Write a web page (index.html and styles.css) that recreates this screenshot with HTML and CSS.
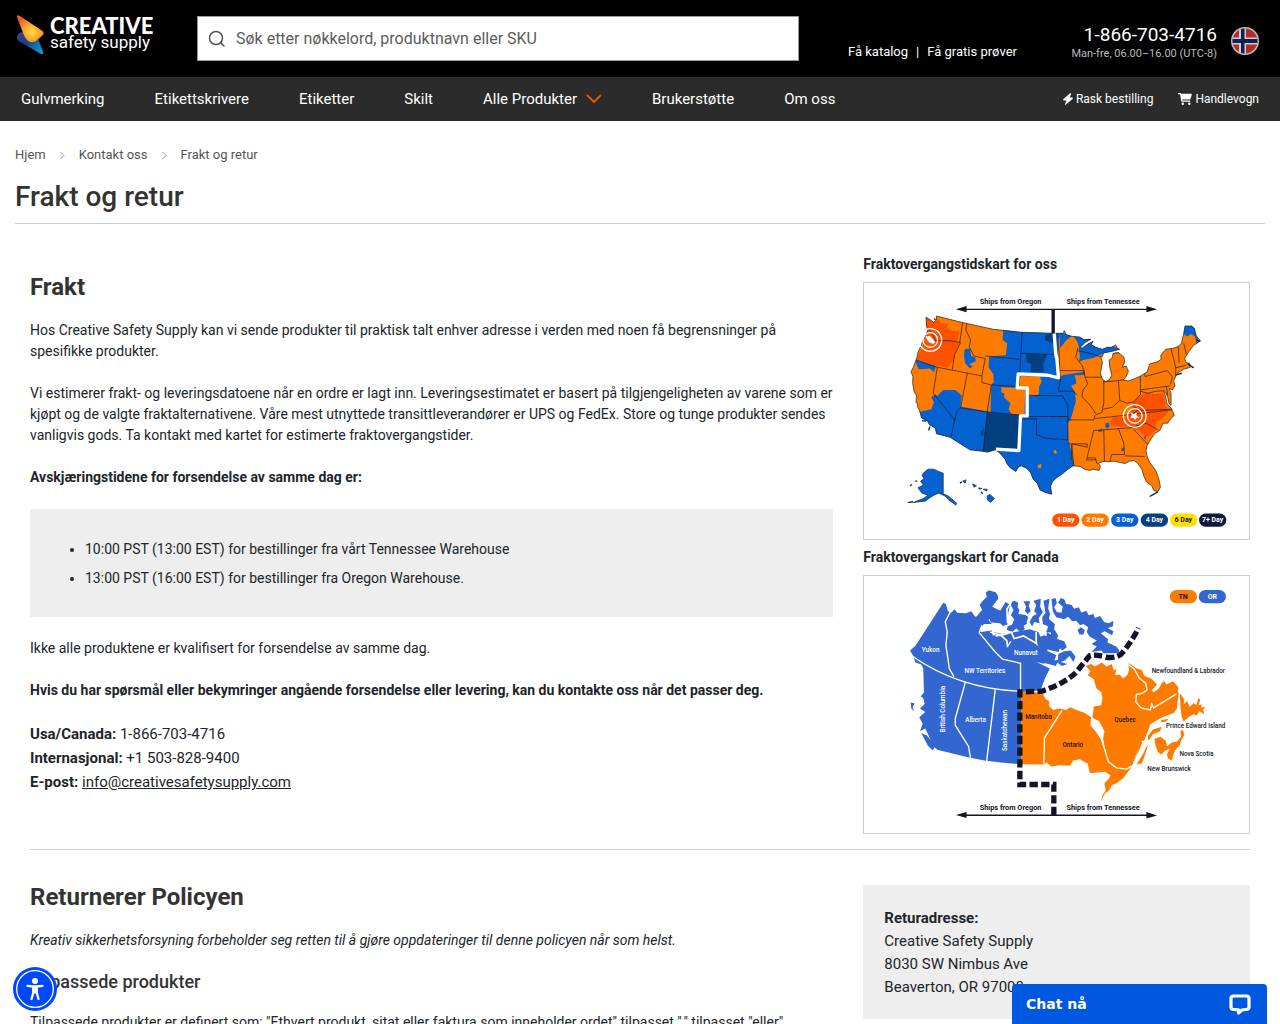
FILE: index.html
```html
<!DOCTYPE html>
<html lang="no">
<head>
<meta charset="utf-8">
<meta name="viewport" content="width=device-width, initial-scale=1">
<title>Frakt og retur | Creative Safety Supply</title>
<link rel="stylesheet" href="styles.css">
</head>
<body>
<header>
  <div class="topbar">
    <a class="logo" href="#">
      <svg width="28" height="42" viewBox="0 0 28 42" aria-hidden="true">
        <defs>
          <radialGradient id="flame" cx="16" cy="18" r="17" gradientUnits="userSpaceOnUse"><stop offset="0" stop-color="#ffdf35"/><stop offset=".5" stop-color="#f9a12c"/><stop offset="1" stop-color="#ee5a2c"/></radialGradient>
          <linearGradient id="sea" x1="0" y1="18" x2="26" y2="40" gradientUnits="userSpaceOnUse"><stop offset="0" stop-color="#4a3a90"/><stop offset=".45" stop-color="#17407f"/><stop offset="1" stop-color="#0aa0e6"/></linearGradient>
        </defs>
        <path d="M5 18Q0 21 1 25Q2 27 6 29L25 40Q28 41 27 38L22 24Z" fill="url(#sea)"/>
        <path d="M1 3Q0 0 4 2L25 16Q29 18 27 21L20 27Q15 30 11 26Q9 24 7 19Z" fill="url(#flame)"/>
      </svg>
      <span class="logo-text"><b>CREATIVE</b><span>safety supply</span></span>
    </a>
    <form class="search" role="search">
      <svg width="18" height="18" viewBox="0 0 18 18" fill="none" stroke="#555" stroke-width="1.5" aria-hidden="true"><circle cx="8" cy="8" r="6.5"/><path d="M12.6 12.6L16 16" stroke-linecap="round"/></svg>
      <input type="text" aria-label="Søk" placeholder="Søk etter nøkkelord, produktnavn eller SKU">
    </form>
    <div class="offers"><a href="#">Få katalog</a><span>|</span><a href="#">Få gratis prøver</a></div>
    <div class="phone"><a href="#">1-866-703-4716</a><span>Man-fre, 06.00–16.00 (UTC-8)</span></div>
    <button class="flag" aria-label="Norge">
      <svg width="28" height="28" viewBox="0 0 28 28"><defs><clipPath id="disc"><circle cx="14" cy="14" r="12.5"/></clipPath></defs>
        <circle cx="14" cy="14" r="14" fill="#bbb"/><g clip-path="url(#disc)"><path d="M0 0H28V28H0Z" fill="#b52a30"/><path d="M8 0h7v28H8zM0 10.500h28v7H0z" fill="#ccc"/><path d="M10 0h3.500v28H10zM0 12h28v4H0z" fill="#0b2354"/></g></svg>
    </button>
  </div>
  <nav class="mainnav">
    <a href="#">Gulvmerking</a><a href="#">Etikettskrivere</a><a href="#">Etiketter</a><a href="#">Skilt</a>
    <a href="#" class="drop">Alle Produkter<svg width="16" height="10" viewBox="0 0 16 10" fill="none" stroke="#e8590c" stroke-width="1.800" stroke-linecap="round" aria-hidden="true"><path d="M1.500 1.500L8 8L14.500 1.500"/></svg></a>
    <a href="#">Brukerstøtte</a><a href="#">Om oss</a>
    <div class="tools">
      <a href="#"><svg width="10" height="12" viewBox="0 0 10 12" fill="#fff" stroke="#fff" stroke-width=".6" aria-hidden="true"><path d="M7.500 .3L.5 6.200Q0 7 .9 7.200H3.800L2.200 11.700L9.500 5.800Q10 5 9.100 4.800H6.200L7.900.7Z"/></svg>Rask bestilling</a>
      <a href="#"><svg width="14" height="12" viewBox="0 0 14 12" fill="#fff" aria-hidden="true"><path d="M0 0H2.300Q2.900 0 3 .8H13.300Q14 .8 13.800 1.500L12.700 5.600Q12.500 6.400 11.700 6.400H4.200L4.400 7.600H12.200V8.800H4Q3.400 8.800 3.300 8.200L2 1.200H0Z"/><circle cx="4.800" cy="10.700" r="1.200"/><circle cx="11.300" cy="10.700" r="1.200"/></svg>Handlevogn</a>
    </div>
  </nav>
</header>

<main>
  <nav class="crumbs" aria-label="Brødsmuler">
    <a href="#">Hjem</a>
    <svg width="5" height="8" viewBox="0 0 5 8" fill="none" stroke="#999"><path d="M.5 1L4 4.500L.5 8"/></svg>
    <a href="#">Kontakt oss</a>
    <svg width="5" height="8" viewBox="0 0 5 8" fill="none" stroke="#999"><path d="M.5 1L4 4.500L.5 8"/></svg>
    <a href="#">Frakt og retur</a>
  </nav>
  <h1>Frakt og retur</h1>

  <section class="row shipping">
    <div class="col-main">
      <h2>Frakt</h2>
      <p>Hos Creative Safety Supply kan vi sende produkter til praktisk talt enhver adresse i verden med noen få begrensninger på spesifikke produkter.</p>
      <p>Vi estimerer frakt- og leveringsdatoene når en ordre er lagt inn. Leveringsestimatet er basert på tilgjengeligheten av varene som er kjøpt og de valgte fraktalternativene. Våre mest utnyttede transittleverandører er UPS og FedEx. Store og tunge produkter sendes vanligvis gods. Ta kontakt med kartet for estimerte fraktovergangstider.</p>
      <p><b>Avskjæringstidene for forsendelse av samme dag er:</b></p>
      <ul class="cutoff">
        <li>10:00 PST (13:00 EST) for bestillinger fra vårt Tennessee Warehouse</li>
        <li>13:00 PST (16:00 EST) for bestillinger fra Oregon Warehouse.</li>
      </ul>
      <p>Ikke alle produktene er kvalifisert for forsendelse av samme dag.</p>
      <p><b>Hvis du har spørsmål eller bekymringer angående forsendelse eller levering, kan du kontakte oss når det passer deg.</b></p>
      <p class="contact"><b>Usa/Canada:</b> 1-866-703-4716<br><b>Internasjonal:</b> +1 503-828-9400<br><b>E-post:</b> <a href="#">info@creativesafetysupply.com</a></p>
    </div>
    <div class="col-side maps">
      <h4>Fraktovergangstidskart for oss</h4>
      <svg class="map" viewBox="12 9 1155 768" role="img" aria-label="Kart over USA">
        <defs><clipPath id="usa"><path id="usaShape" d="M198 112L212 120L222 128L226 122L223 116L230 118L229 108L305 127L400 148L487 157L581 160H611L613 152L619 164L636 169L660 171L672 179L693 178L676 188L660 203L668 204L684 192L700 184L694 194L708 202L728 208L742 202L754 202L768 195L772 204L780 208L758 214L732 219L726 232L722 228L728 246L722 280L728 298L738 305L748 300L756 286L750 262L748 240L756 236L760 220L776 218L792 231L795 245L788 262L799 258L806 274L798 292L790 301L806 303L826 296L842 288L862 276L870 252L895 245L904 238L903 226L918 208L940 205L955 200L965 190L972 160L976 138H996L1004 145L1010 168L1022 182L1012 190L1002 196L995 205L984 220L975 235L979 248L990 250L992 262L982 265L972 268L953 280L948 290L942 302L946 318L938 330L934 328L928 326L934 340V376L928 372L924 352L918 340L912 334L918 352L922 372L935 386L944 406L934 416L924 430L910 430L900 452L884 462L870 484L862 497L859 512L862 530L870 548L888 572L898 600L902 622L894 636L882 632L876 618L860 606L852 588L846 568L832 548L822 542L810 544L796 551L780 548L764 544L744 546L730 545L716 550L722 560L718 572L700 568L690 572L674 568L662 560L640 558L622 570L608 582L590 594L578 606L572 620L576 643L556 638L540 630L532 610L520 598L512 578L500 565L484 558L475 562L468 575L450 563L440 550L436 538L418 518L406 510L383 517L372 515L330 510L270 472L230 462L226 445L208 434L203 424L185 414L178 390L172 380L174 372L168 368L170 348L162 334L158 310L159 290L153 276L160 262L170 235L174 218L190 180L204 150L200 140Z"/></clipPath></defs>
        <use href="#usaShape" fill="#ff7b00"/>
        <g clip-path="url(#usa)">
          <path fill="#0362d0" d="M428 146L580 155L592 232L594 296L610 285L672 276L672 285L645 286L650 310L634 318L646 336L648 365L638 400L632 420L624 430L626 480L638 530L646 570L560 660L400 560L150 480L160 400L214 388L222 366L214 352L226 344L232 348L250 330L285 330L305 346L302 380L392 396L394 318L398 310L400 282L386 262L388 230L438 226L442 190L428 180L430 160ZM165 240L228 258L222 276L210 266L176 268ZM314 208L330 206L334 228L346 232L348 244L328 252L338 260L330 266L316 250L312 230Z"/>
          <path fill="#0362d0" d="M612 160L640 166L620 180L600 205L596 270L580 276L575 155ZM657 205L690 180L780 205V220L728 222L700 234L670 240L658 246L660 228ZM640 168L700 174L660 210L653 186ZM972 130H1000L1015 175L1020 195L1010 190L1006 170L994 162L982 170L970 160Z"/>
          <path fill="#ff7b00" d="M424 322L496 324L494 405L455 402L446 388L452 370L432 352L434 342L424 336ZM482 288L540 290L546 305L538 320L536 345L505 347L502 322L474 320ZM596 180L600 170L600 250L594 236ZM374 290L382 262L400 282L402 308L366 310L366 292Z"/>
          <path fill="#044080" d="M382 398L480 406L474 512L370 514ZM498 223H562L556 240L550 252L552 276H512L514 252L500 246ZM556 165L580 160L584 190L570 186L556 182ZM362 455L372 446L370 470L360 464Z"/>
          <path fill="#ff5200" d="M198 112L228 124L228 116L270 130L292 148L300 160L290 186L298 192L284 226L280 244L262 264L168 242L196 180ZM820 366L844 346L860 338L880 342L910 340L918 374L926 396L904 420L890 426L888 450L872 466L858 472L830 446L806 440H756L748 430L760 412L808 410Z"/>
          <path fill="#e8450a" d="M834 368L852 356L862 364L846 400L832 396ZM206 182L280 184L284 200L274 188L220 190Z" opacity=".5"/>
          <path fill="#ff7b00" d="M234 114L312 132L306 190L296 180L302 152L280 154L262 144L264 132L240 128Z"/>
          <path fill="#0362d0" d="M738 430L746 428L750 440L742 446L736 440ZM716 450L728 448L726 456L716 456ZM786 506L792 502V514L784 512ZM852 474L858 468V480Z"/>
          <path fill="#ff7b00" d="M580 514L588 510L592 520L584 522ZM534 556L544 552V564L534 566Z"/>
          <path fill="none" stroke="#1b1a20" stroke-width="2" d="M206 146L228 182L270 182L302 188M302 188L284 224L277 270M168 240L232 262L366 288M308 128L299 190M320 132L318 150L332 180L328 200L342 228L376 236L366 288M376 228L478 238M487 157L478 316M484 220L586 224M366 288V308L394 315L470 320M232 262L220 340L284 420L274 470M322 280L302 384L290 396L284 424M302 384L380 396L486 406M394 316L382 396L370 514M486 406L476 510M490 417H530V464L556 475L590 478L625 480M500 346L600 348M500 410L624 410"/>
          <g transform="translate(570 0)" fill="none" stroke="#1b1a20" stroke-width="2"><path d="M30 272H103L104 286M22 160L28 220L30 272L32 300L26 330M26 334H70L82 345M30 348H38L54 376V480M54 420H132L136 406M0 410H54M54 492H112V502L66 492L64 540M66 494L72 560M84 204L78 232L98 258L106 292H154M106 292L114 312L100 330L96 350L118 372L140 404L156 398L162 370V300M206 302L210 362L188 382L160 388M162 306L206 302L232 298M210 362L232 370L252 366L272 344V288M272 330L360 318M284 278L286 290L352 272L368 290L362 314M272 334L294 340L318 334L344 332M250 372L262 392L246 404L136 416M262 392L370 388M246 404L380 388M132 452L240 444L270 436M132 450L120 500L110 540H140M162 450L164 545M206 446L222 490L224 524H186L180 546M226 528L284 530M240 444L272 436L290 430L324 450M250 446L294 494M112 534H136L142 552M364 206L378 262V290M386 200L388 248M402 190L410 224M376 264L410 256M84 212L128 222L150 230M350 320L354 346"/></g>
        </g>
        <use href="#usaShape" fill="none" stroke="#1b1a20" stroke-width="2"/>
        <path fill="none" stroke="#fff" stroke-width="10" stroke-linejoin="round" d="M583 160L588 225L591 235L596 294L565 286L475 282L472 324H502V408H482L477 512L408 508"/>
        <path fill="#0362d0" stroke="#10254a" stroke-width="2" d="M194 576L204 568H222L234 574L250 580V642L264 648L290 670L288 676L266 660L254 648L236 640L222 646L210 654L196 664L160 668L190 656L204 646L186 640L174 624L190 616L182 604L192 596L186 586ZM382 648L390 644L404 656L392 668L382 660ZM308 604L318 600L316 610ZM338 612L350 618L342 622ZM370 628L382 628L380 634ZM143 668L158 664V668ZM356 624L366 626L358 628Z"/>
        <path stroke="#10254a" stroke-width="4" d="M150 618L156 614M166 604L172 604M186 422L198 424M210 440L206 452M300 610L306 606M364 636L368 642M870 650L884 642L894 636M984 252L1002 264M1010 180L1022 184M950 285L966 280"/>
        <g fill="none" stroke="#fff" stroke-width="4"><circle cx="211" cy="180" r="34"/><circle cx="211" cy="180" r="22"/><circle cx="825" cy="408" r="34"/><circle cx="825" cy="408" r="22"/></g>
        <path fill="#fff" d="M196 170L210 168L216 174L226 188L220 192L208 188L202 180ZM812 398L822 402L832 398L830 406L840 414L832 412L828 420L820 414L812 414L816 406Z"/>
        <g class="ink"><path d="M288 88L320 78V86H860V78L892 88L860 97V90H320V97ZM575 90H585V160H575Z"/></g>
        <g class="legend"><rect x="577" y="701" width="82" height="40" rx="20" fill="#ff5200"/><rect x="665" y="701" width="82" height="40" rx="20" fill="#ff7b00"/><rect x="754" y="701" width="82" height="40" rx="20" fill="#0362d0"/><rect x="843" y="701" width="82" height="40" rx="20" fill="#044080"/><rect x="931" y="701" width="82" height="40" rx="20" fill="#ffde00"/><rect x="1018" y="701" width="82" height="40" rx="20" fill="#0c1a3c"/>
        <text x="618" y="728">1 Day</text><text x="706" y="728">2 Day</text><text x="795" y="728">3 Day</text><text x="884" y="728">4 Day</text><text x="971" y="728" class="dark">6 Day</text><text x="1059" y="728">7+ Day</text></g>
        <text class="ships" x="452" y="72">Ships from Oregon</text><text class="ships" x="730" y="72">Ships from Tennessee</text>
      </svg>
      <h4>Fraktovergangskart for Canada</h4>
      <svg class="map" viewBox="12 12 1155 771" role="img" aria-label="Kart over Canada">
        <path fill="#3367cf" d="M150 236L166 222L250 92L258 96L264 118L274 122L284 112L292 122L318 124L334 118L346 134L362 132L372 146L384 142L396 156H372L364 166L362 180L396 176L398 190L420 192L434 210L446 222L458 204L470 206L476 196L500 200L520 192L524 214L534 222L530 200L552 190L574 196L590 210L604 220L596 240L566 234L590 248L584 266L600 262L586 284L530 270L570 290L556 318L542 356L484 360V577L430 573L378 567L330 558L232 534L224 526L218 536L204 522L184 484L200 490L212 504L196 470L180 478L188 456L178 436L196 420L180 410L194 396L190 378L182 374L192 362L190 290L184 278L166 272L160 252ZM152 392L164 394L158 406L162 418L154 410Z"/>
        <!-- Arctic islands -->
        <g transform="translate(345 30)"><path fill="#3367cf" d="M0 110L14 92L22 84L14 68L26 54L36 44L32 32L42 25L62 31L68 38L70 50L58 66L52 74L76 86L92 60L106 68L100 92L98 128L84 132L76 124L48 122L44 112L30 118L20 124L6 120ZM50 92L74 88L90 98L88 112L62 104L48 108ZM104 62L118 56L130 62L128 76L134 84L130 96L150 98L162 106L158 124L146 132L150 142L136 150L124 140L112 150L96 144L98 134L112 128L118 112L108 100L116 84ZM146 58H166L162 72L168 88L158 96L150 86L154 74ZM176 56L198 50L196 74L204 90L192 108L194 124L178 120L172 134L164 120L174 102L186 96L178 88L184 70ZM206 56L224 50L220 80L226 96L222 110L240 126L238 142L250 160L244 180L230 174L228 152L214 150L220 134L204 126L202 106L212 92ZM230 52L242 48L246 64L238 76L246 90L260 92L264 74L250 62L258 48L268 52L274 66L290 68L298 80L312 76L320 92L334 86L342 100L356 96L360 108L376 102L388 120L402 124L416 116L414 134L398 138L416 148L412 160L390 148L378 154L400 172L398 182L424 194L434 206L432 214L386 214L380 206L350 210L366 194L350 186L366 176L344 164L336 150L340 136L326 126L316 130L304 116L292 118L280 104L268 112L244 106L234 88ZM308 144L318 136L330 144L326 158L314 158ZM56 150L82 156L112 152L132 148L164 142L190 150L198 166L182 190L168 180L128 184L106 178L96 192L86 176L66 170ZM216 150L250 172L268 178L276 196L262 206L248 192L230 190L214 176ZM250 216L268 208L288 206L302 224L296 240L284 222L270 236L258 240L278 246L262 252L250 244Z"/>
        <path fill="none" stroke="#fff" stroke-width="5" d="M46 150L78 160L96 176L98 196M110 152L118 170L146 162L184 184V150M218 204L250 220M62 162L86 158L112 150M208 246L240 254M110 60L96 82L98 124M166 94L158 122L172 140M138 56L140 96"/></g>
        <path fill="#ff7b00" d="M484 360L548 362L556 380L568 388V402L580 414L598 410L618 414L632 406L650 414L672 422L694 436L692 460L708 480L722 500L750 574L815 587L790 619L770 634L756 640L748 656L736 664L724 686L728 670L738 656L734 634L746 622L752 610L736 600L690 604L684 576L660 562L640 566L630 582L600 580L574 584L560 572L554 578L484 577Z"/>
        <g transform="translate(570 0)"><path fill="#ff7b00" d="M108 282L124 276L136 284L156 272L170 284L186 276L192 294L200 292L196 310L210 308L220 320L234 308L238 292L234 274L242 276L260 290L276 294L284 312L304 320L322 338L342 324L350 338L370 328L386 346L384 366L376 392L346 408L310 426L300 448L296 474L280 506L262 540L248 580L220 590L190 584L170 560L160 500L164 478L148 448L128 438L132 404L154 400L158 378L154 360L140 350L132 322L114 310L122 298Z"/></g>
        <!-- Gulf of St. Lawrence and the Atlantic provinces -->
        <g transform="translate(660 249)">
          <path fill="#ff7b00" d="M165 322L190 280L206 252L218 224L240 212L262 204L290 180L300 160L296 110L286 130L220 170L180 270L160 330L186 326L194 306L206 268Z"/>
          <path fill="#fff" d="M304 112V172L314 204L306 236L288 250L270 262L258 252L238 242L216 256L202 268L192 294L166 336L158 330L188 264L184 260L194 256L212 208L246 188L282 174L292 160L296 120Z"/>
          <path fill="#ff7b00" d="M206 258L204 244L220 224L246 216L240 230L220 238ZM244 196L266 192L260 200L244 202ZM224 252L242 246L258 258L262 274L278 262L292 260L304 246L302 228L310 226L314 240L304 258L300 272L286 286L280 302L276 318L264 310L262 298L270 282L258 286L244 300L234 290L228 274ZM300 114L314 134L312 148L322 138L330 156L342 144L350 150L356 130L362 134L356 152L366 148L364 158L378 156L370 164L374 178L358 168L352 182L342 178L328 186L312 200L306 186L302 156Z"/>
          <path fill="#fff" d="M216 106L230 92L236 78L258 76L246 84L238 100L222 112Z"/>
        </g>
        <g fill="none" stroke="#fff" stroke-width="4"><path d="M272 118L256 150L262 180L258 220L264 260L268 290L282 314M156 252Q300 352 484 358M366 160L358 182L406 240L428 262L482 274V356M316 332L286 440V460L326 524L332 560M406 354L380 570M606 416L554 498L552 576M722 490L732 524L746 570L770 588L800 592L820 582M804 276L824 292L838 318L858 334L862 354L848 364L830 368L828 390L844 408L872 414L876 396L882 408L950 366"/></g>
        <g class="ink"><path d="M288 730L320 721V728H860V721L892 731L860 740V733H320V739Z"/></g>
        <path fill="none" stroke="#141427" stroke-width="16" stroke-dasharray="25 10" d="M582 730V638H480V360L546 358Q620 332 650 300Q680 262 690 251Q704 246 740 256Q776 260 790 240Q820 202 836 168"/>
        <g class="legend"><rect x="930" y="54" width="82" height="40" rx="20" fill="#ff7b00"/><rect x="1017" y="54" width="82" height="40" rx="20" fill="#3367cf"/><text class="dark" x="970" y="82">TN</text><text x="1058" y="82">OR</text></g>
        <g class="places light"><text x="212" y="241">Yukon</text><text x="375" y="302">NW Territories</text><text x="498" y="250">Nunavut</text><text x="347" y="449">Alberta</text><text transform="translate(256 412) rotate(-90)">British Columbia</text><text transform="translate(440 476) rotate(-90)">Saskatchewan</text></g>
        <g class="places"><text x="536" y="441">Manitoba</text><text x="639" y="526">Ontario</text><text x="796" y="449">Quebec</text><text x="986" y="302">Newfoundland &amp; Labrador</text><text x="1008" y="469">Prince Edward Island</text><text x="1010" y="552">Nova Scotia</text><text x="928" y="598">New Brunswick</text></g>
        <text class="ships" x="452" y="715">Ships from Oregon</text><text class="ships" x="730" y="715">Ships from Tennessee</text>
      </svg>
    </div>
  </section>

  <hr>

  <section class="row">
    <div class="col-main">
      <h2>Returnerer Policyen</h2>
      <p><i>Kreativ sikkerhetsforsyning forbeholder seg retten til å gjøre oppdateringer til denne policyen når som helst.</i></p>
      <h3>Tilpassede produkter</h3>
      <p>Tilpassede produkter er definert som: "Ethvert produkt, sitat eller faktura som inneholder ordet" tilpasset "," tilpasset "eller"</p>
    </div>
    <div class="col-side">
      <address><b>Returadresse:</b><br>Creative Safety Supply<br>8030 SW Nimbus Ave<br>Beaverton, OR 97008</address>
    </div>
  </section>
</main>

<button class="access" aria-label="Tilgjengelighet">
  <svg width="44" height="44" viewBox="0 0 44 44"><circle cx="22" cy="22" r="22" fill="#0048ff"/><circle cx="22" cy="22" r="18.300" fill="none" stroke="#fff" stroke-width="1.300"/><circle cx="22" cy="14" r="3" fill="#fff"/><path d="M14.500 18.800L20 19.500H24L29.500 18.800M22 20V25.500M20.200 20V26L18.500 32M23.800 20V26L25.500 32" fill="none" stroke="#fff" stroke-width="2.300" stroke-linecap="round"/></svg>
</button>
<button class="chat"><span>Chat nå</span>
  <svg width="22" height="21" viewBox="0 0 22 21" fill="none" stroke="#fff" stroke-width="3.200" stroke-linejoin="round" aria-hidden="true"><path d="M4.500 2H17.500Q20 2 20 4.500V13Q20 15.500 17 15.500L13 16L9.500 19V15.800L4.500 15.500Q2 15.500 2 13V4.500Q2 2 4.500 2Z"/></svg>
</button>
</body>
</html>
```
FILE: styles.css
```css
* { box-sizing: border-box; }
body { margin: 0; height: 100vh; overflow: hidden; font: 14px/21px Roboto, "Liberation Sans", sans-serif; color: #212529; background: #fff; }
a { color: inherit; text-decoration: none; }
button { border: 0; padding: 0; background: none; cursor: pointer; }
svg { display: block; flex: none; }
h1, h2, h3, h4, p, ul { margin: 0; }
b, h2, h4 { font-weight: 700; }

.topbar { display: flex; align-items: center; height: 77px; padding: 0 21px 0 16px; background: #000; color: #fff; }
.logo { display: flex; align-items: center; width: 181px; height: 77px; gap: 6px; padding-bottom: 8px; }
.logo-text { display: flex; flex-direction: column; }
.logo-text b { font: 900 22px/16px Lato, sans-serif; }
.logo-text span { font-size: 17px; line-height: 17px; }
.search { display: flex; flex: 1; align-items: center; height: 45px; padding-left: 10px; gap: 10px; border: 1px solid #999; background: #fff; }
.search input { flex: 1; min-width: 0; height: 40px; padding: 0; border: 0; outline: 0; background: none; font: 16px/24px Roboto, sans-serif; }
.search input::placeholder { color: #5c5c5c; opacity: 1; }
.offers { display: flex; gap: 8px; margin: 25px 49px 0 49px; font-size: 13px; }
.phone { display: flex; flex-direction: column; align-items: flex-end; min-width: 151px; margin-right: 14px; padding-top: 8px; }
.phone a { font-size: 19px; line-height: 22px; }
.phone span { font-size: 11px; line-height: 16px; color: #bbb; }
.flag { margin-top: 5px; }

.mainnav { display: flex; align-items: center; gap: 50px; height: 44px; padding: 0 21px; background: #2b2b2b; color: #fff; font-size: 15px; }
.drop { display: flex; align-items: center; gap: 9px; }
.tools { display: flex; gap: 25px; margin-left: auto; font-size: 12px; }
.tools a { display: flex; align-items: center; gap: 3px; }

main { padding: 23px 15px 0; }
.crumbs { display: flex; align-items: center; gap: 14px; font-size: 13px; color: #555; }
h1 { padding: 15px 0 10px; border-bottom: 1px solid #ccc; font-size: 28px; line-height: 33px; font-weight: 500; color: #333; }
.row { display: flex; }
.col-main { width: 66.667%; padding: 0 15px; }
.col-side { width: 33.333%; padding: 0 15px; }
.shipping { padding: 30px 0 15px; }
hr { margin: 0 15px 14px; border: 0; border-top: 1px solid #ccc; }
h2 { margin: 19px 0 18px; font-size: 24px; line-height: 29px; color: #333; }
h3 { margin-bottom: 20px; font-size: 18px; line-height: 20px; font-weight: 500; color: #333; }
p { margin-bottom: 21px; }
.cutoff { display: grid; gap: 8px; margin-bottom: 21px; padding: 30px 15px 28px 55px; background: #eee; }
.contact { margin: 0; font-size: 15px; line-height: 24px; }
.contact a { text-decoration: underline; }
.maps h4 { margin-bottom: 7px; font-size: 14px; }
.map { width: 100%; height: auto; border: 1px solid #ccc; }
.map + h4 { margin-top: 7px; }
.map text { font-family: Roboto, sans-serif; font-weight: 700; text-anchor: middle; fill: #141427; }
.map .ships { font-size: 22px; }
.ink { fill: #141427; }
.map .legend text { font-size: 21px; fill: #fff; }
.map .legend .dark { fill: #141427; }
.map .places text { font-size: 19px; font-weight: 500; }
.map .light text { fill: #fff; }
address { margin-top: 21px; padding: 22px 21px 20px; background: #eee; font-size: 15px; line-height: 23px; font-style: normal; }

.access { position: fixed; left: 13px; bottom: 13px; }
.chat { position: fixed; right: 13px; bottom: 0; display: flex; align-items: center; justify-content: space-between; width: 255px; height: 40px; padding: 0 16px 0 14px; border-radius: 4px 4px 0 0; background: #0058e0; color: #fff; font: 700 14px/20px "DejaVu Sans", sans-serif; }
```
